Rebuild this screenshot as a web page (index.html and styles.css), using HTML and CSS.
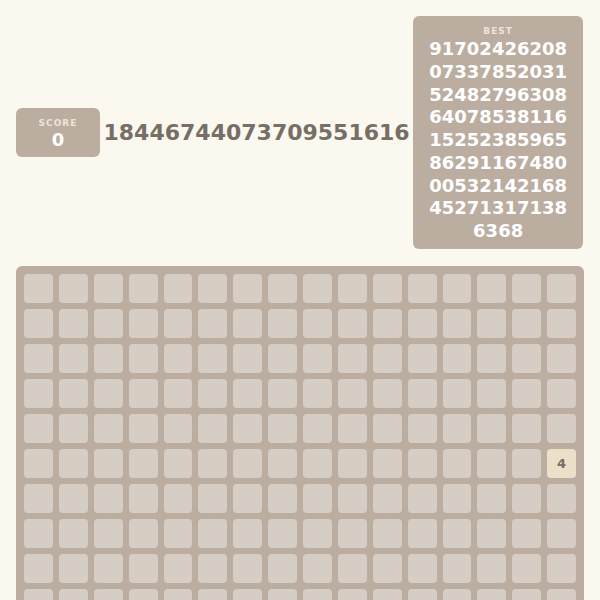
FILE: index.html
```html
<!DOCTYPE html>
<html>
<head>
<meta charset="utf-8">
<link rel="stylesheet" href="styles.css">
</head>
<body>
<div class="container">
  <div class="header">
    <div class="box score-box">
      <div class="label">SCORE</div>
      <div class="value">0</div>
    </div>
    <div class="big">18446744073709551616</div>
    <div class="box best-box">
      <div class="label">BEST</div>
      <div class="value best-value">91702426208073378520315248279630864078538116152523859658629116748000532142168452713171386368</div>
    </div>
  </div>
  <div class="board">
<div class="c"></div><div class="c"></div><div class="c"></div><div class="c"></div><div class="c"></div><div class="c"></div><div class="c"></div><div class="c"></div><div class="c"></div><div class="c"></div><div class="c"></div><div class="c"></div><div class="c"></div><div class="c"></div><div class="c"></div><div class="c"></div>
<div class="c"></div><div class="c"></div><div class="c"></div><div class="c"></div><div class="c"></div><div class="c"></div><div class="c"></div><div class="c"></div><div class="c"></div><div class="c"></div><div class="c"></div><div class="c"></div><div class="c"></div><div class="c"></div><div class="c"></div><div class="c"></div>
<div class="c"></div><div class="c"></div><div class="c"></div><div class="c"></div><div class="c"></div><div class="c"></div><div class="c"></div><div class="c"></div><div class="c"></div><div class="c"></div><div class="c"></div><div class="c"></div><div class="c"></div><div class="c"></div><div class="c"></div><div class="c"></div>
<div class="c"></div><div class="c"></div><div class="c"></div><div class="c"></div><div class="c"></div><div class="c"></div><div class="c"></div><div class="c"></div><div class="c"></div><div class="c"></div><div class="c"></div><div class="c"></div><div class="c"></div><div class="c"></div><div class="c"></div><div class="c"></div>
<div class="c"></div><div class="c"></div><div class="c"></div><div class="c"></div><div class="c"></div><div class="c"></div><div class="c"></div><div class="c"></div><div class="c"></div><div class="c"></div><div class="c"></div><div class="c"></div><div class="c"></div><div class="c"></div><div class="c"></div><div class="c"></div>
<div class="c"></div><div class="c"></div><div class="c"></div><div class="c"></div><div class="c"></div><div class="c"></div><div class="c"></div><div class="c"></div><div class="c"></div><div class="c"></div><div class="c"></div><div class="c"></div><div class="c"></div><div class="c"></div><div class="c"></div><div class="c t4">4</div>
<div class="c"></div><div class="c"></div><div class="c"></div><div class="c"></div><div class="c"></div><div class="c"></div><div class="c"></div><div class="c"></div><div class="c"></div><div class="c"></div><div class="c"></div><div class="c"></div><div class="c"></div><div class="c"></div><div class="c"></div><div class="c"></div>
<div class="c"></div><div class="c"></div><div class="c"></div><div class="c"></div><div class="c"></div><div class="c"></div><div class="c"></div><div class="c"></div><div class="c"></div><div class="c"></div><div class="c"></div><div class="c"></div><div class="c"></div><div class="c"></div><div class="c"></div><div class="c"></div>
<div class="c"></div><div class="c"></div><div class="c"></div><div class="c"></div><div class="c"></div><div class="c"></div><div class="c"></div><div class="c"></div><div class="c"></div><div class="c"></div><div class="c"></div><div class="c"></div><div class="c"></div><div class="c"></div><div class="c"></div><div class="c"></div>
<div class="c"></div><div class="c"></div><div class="c"></div><div class="c"></div><div class="c"></div><div class="c"></div><div class="c"></div><div class="c"></div><div class="c"></div><div class="c"></div><div class="c"></div><div class="c"></div><div class="c"></div><div class="c"></div><div class="c"></div><div class="c"></div>
<div class="c"></div><div class="c"></div><div class="c"></div><div class="c"></div><div class="c"></div><div class="c"></div><div class="c"></div><div class="c"></div><div class="c"></div><div class="c"></div><div class="c"></div><div class="c"></div><div class="c"></div><div class="c"></div><div class="c"></div><div class="c"></div>
<div class="c"></div><div class="c"></div><div class="c"></div><div class="c"></div><div class="c"></div><div class="c"></div><div class="c"></div><div class="c"></div><div class="c"></div><div class="c"></div><div class="c"></div><div class="c"></div><div class="c"></div><div class="c"></div><div class="c"></div><div class="c"></div>
<div class="c"></div><div class="c"></div><div class="c"></div><div class="c"></div><div class="c"></div><div class="c"></div><div class="c"></div><div class="c"></div><div class="c"></div><div class="c"></div><div class="c"></div><div class="c"></div><div class="c"></div><div class="c"></div><div class="c"></div><div class="c"></div>
<div class="c"></div><div class="c"></div><div class="c"></div><div class="c"></div><div class="c"></div><div class="c"></div><div class="c"></div><div class="c"></div><div class="c"></div><div class="c"></div><div class="c"></div><div class="c"></div><div class="c"></div><div class="c"></div><div class="c"></div><div class="c"></div>
<div class="c"></div><div class="c"></div><div class="c"></div><div class="c"></div><div class="c"></div><div class="c"></div><div class="c"></div><div class="c"></div><div class="c"></div><div class="c"></div><div class="c"></div><div class="c"></div><div class="c"></div><div class="c"></div><div class="c"></div><div class="c"></div>
<div class="c"></div><div class="c"></div><div class="c"></div><div class="c"></div><div class="c"></div><div class="c"></div><div class="c"></div><div class="c"></div><div class="c"></div><div class="c"></div><div class="c"></div><div class="c"></div><div class="c"></div><div class="c"></div><div class="c"></div><div class="c"></div>
  </div>
</div>
</body>
</html>
```
FILE: styles.css
```css
html, body {
  margin: 0;
  padding: 0;
  background: #faf8ef;
}
body {
  font-family: "DejaVu Sans", "Liberation Sans", sans-serif;
  color: #776e65;
}
.container {
  padding: 16px;
  width: 568px;
}
.header {
  display: flex;
  align-items: center;
  gap: 3.5px;
}
.box {
  flex-shrink: 0;
  background: #bbada0;
  border-radius: 6px;
  color: #fff;
  text-align: center;
  box-sizing: border-box;
}
.score-box {
  width: 84px;
  height: 49px;
  padding-top: 8px;
}
.label {
  font-size: 9px;
  font-weight: 700;
  letter-spacing: 1px;
  color: #eee4da;
  line-height: 14px;
}
.value {
  font-size: 18px;
  font-weight: 700;
  line-height: 20px;
}
.big {
  font-size: 22px;
  font-weight: 700;
  color: #776e65;
  white-space: nowrap;
}
.best-box {
  width: 170px;
  padding: 8px 13px 6px;
}
.best-value {
  font-size: 18px;
  line-height: 22.75px;
  word-break: break-all;
}
.board {
  margin-top: 17px;
  background: #bbada0;
  border-radius: 6px;
  padding: 8px;
  display: grid;
  grid-template-columns: repeat(16, 1fr);
  gap: 6px;
}
.c {
  height: 29px;
  border-radius: 4px;
  background: #d6cdc4;
}
.t4 {
  background: #ede0c8;
  color: #776e65;
  font-weight: 700;
  font-size: 13px;
  display: flex;
  align-items: center;
  justify-content: center;
}
```
